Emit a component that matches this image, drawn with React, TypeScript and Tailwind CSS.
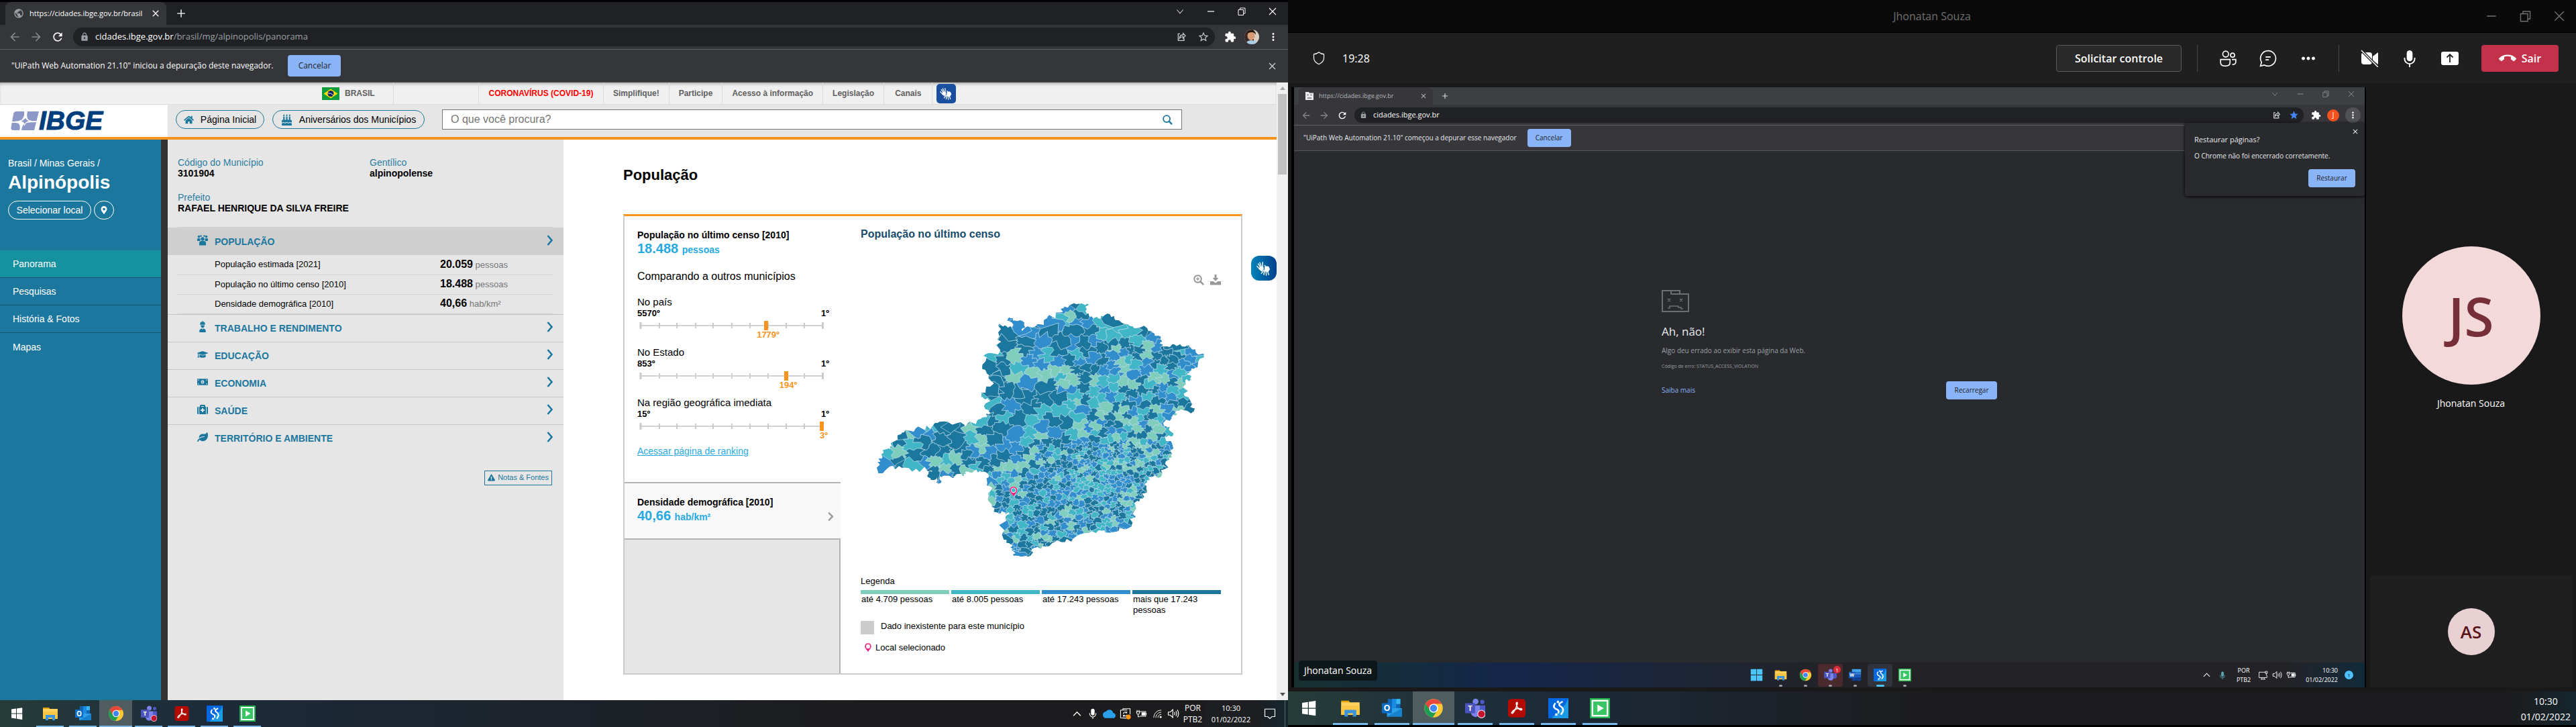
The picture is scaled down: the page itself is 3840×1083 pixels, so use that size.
import React from "react";
import {
  FaHome,
  FaBirthdayCake,
  FaGraduationCap,
  FaMoneyBillAlt,
  FaMedkit,
  FaLeaf,
  FaMapMarkerAlt,
  FaExclamationTriangle,
  FaChevronRight,
} from "react-icons/fa";
import {
  MdArrowBack,
  MdArrowForward,
  MdRefresh,
  MdLock,
  MdPublic,
  MdExtension,
  MdStarBorder,
  MdStar,
  MdMoreVert,
  MdMoreHoriz,
  MdAdd,
  MdClose,
  MdCallEnd,
  MdCloud,
} from "react-icons/md";

/* ---------- window glyphs ---------- */

type IconProps = { className?: string };

const Stroke = ({ className, children, vb = "0 0 24 24", w = 1.5 }: IconProps & { children: React.ReactNode; vb?: string; w?: number }) => (
  <svg viewBox={vb} className={className} fill="none" stroke="currentColor" strokeWidth={w} aria-hidden="true">
    {children}
  </svg>
);

const CaretDown = (p: IconProps) => <Stroke {...p} vb="0 0 12 12" w={1}><path d="M1.5 3.5 6 9l4.5-5.5" /></Stroke>;
const CaretUp = (p: IconProps) => <Stroke {...p} vb="0 0 12 12" w={1.2}><path d="M1 8.5 6 3.5l5 5" /></Stroke>;
const Minimize = (p: IconProps) => <Stroke {...p} vb="0 0 12 12" w={1.2}><path d="M1 6h10" /></Stroke>;
const Restore = (p: IconProps) => <Stroke {...p} vb="0 0 12 12" w={1}><path d="M1 3.5h7.5v8H1zM3.5 3.500v-2.500H11v8H8.500" /></Stroke>;
const Cross = (p: IconProps) => <Stroke {...p} vb="0 0 12 12" w={1.1}><path d="m1 1 10 10M11 1 1 11" /></Stroke>;
const ShareBox = (p: IconProps) => (
  <Stroke {...p} w={2}><path d="M9 5H5v15h13v-5" /><path d="M8 15c0-5 3-7.500 8-7.500V4l5 5.500-5 5.500v-3.500c-4 0-6 1-8 3.500z" /></Stroke>
);
const Mic = (p: IconProps) => (
  <svg viewBox="0 0 24 24" className={p.className} fill="currentColor" aria-hidden="true">
    <rect x="8" y="1" width="8" height="15" rx="4" />
    <path d="M5 11v1.500a7 7 0 0 0 14 0V11" fill="none" stroke="currentColor" strokeWidth="1.700" />
    <path d="M12 19.500V24" stroke="currentColor" strokeWidth="1.700" />
  </svg>
);
const Speaker = (p: IconProps) => (
  <Stroke {...p}><path d="M2 9h4l5-5v16l-5-5H2z" /><path d="M14 9q2 3 0 6M17 7q3.500 5 0 10M20 4.500q5 7.500 0 15" /></Stroke>
);
const Battery = (p: IconProps) => (
  <Stroke {...p}><path d="M9 7h12v10H8" /><path d="M22 10v4" /><path d="M13 9.500h6v5h-6z" fill="currentColor" /><path d="M3 4v3M7 4v3M2 7h6v3q-1 3-3 3t-3-3zM5 13v5h3" /></Stroke>
);
const Wifi = (p: IconProps) => (
  <Stroke {...p}><path d="M3 21C3 11 11 3 21 3M8 21C8 14 14 8 21 8M13 21c0-4.500 3.500-8 8-8" /><circle cx="19.500" cy="19.500" r="1.800" fill="currentColor" /></Stroke>
);
const Sync = (p: IconProps) => (
  <svg viewBox="0 0 24 24" className={p.className} fill="none" stroke="currentColor" strokeWidth="1.500" aria-hidden="true">
    <path d="M22 13V1H7v2M2 4h14v0M2 4v16l12 1" />
    <path d="M8 12q0-4 4-4 2 0 3 2M15 7v3h-3M15 14q-1 3-4 3-2 0-3-2M8 18v-3h3" />
    <circle cx="18.500" cy="18.500" r="5" fill="#ff9500" stroke="none" />
  </svg>
);
const Monitor = (p: IconProps) => (
  <Stroke {...p}><path d="M17 4H1v14h20v-6M8 18v4M14 18v4M5 22h12" /><path d="M17 2h5v5h-5zM19.500 7v5" /></Stroke>
);
const Notification = (p: IconProps) => <Stroke {...p}><path d="M2 3h20v15h-6l-4 4-4-4H2z" /></Stroke>;
const Pin = (p: IconProps) => (
  <svg viewBox="0 0 28 48" preserveAspectRatio="none" className={p.className} aria-hidden="true">
    <path d="M14 1C6 1 1 8 1 17c0 12 10 16 13 30 3-14 13-18 13-30C27 8 22 1 14 1z" fill="#ec1c78" />
    <ellipse cx="14" cy="17" rx="8.500" ry="11" fill="#fff" />
  </svg>
);
const Download = (p: IconProps) => (
  <svg viewBox="0 0 16 16" className={p.className} fill="currentColor" aria-hidden="true">
    <path d="M6.500 0h3v5h3L8 10 3.500 5h3z" /><path d="M0 10h4.500L8 12.500 11.500 10H16v5.500H0z" />
  </svg>
);
const ZoomIn = (p: IconProps) => (
  <Stroke {...p} vb="0 0 16 16" w={2}><circle cx="6.500" cy="6.500" r="5.300" /><path d="m10.500 10.500 4.700 4.700" strokeWidth="2.500" /><path d="M4 6.500h5M6.500 4v5" strokeWidth="1.300" /></Stroke>
);
const Lens = (p: IconProps) => (
  <Stroke {...p} vb="0 0 16 16" w={2}><circle cx="6.500" cy="6.500" r="5.300" /><path d="m10.500 10.500 4.500 4.500" strokeWidth="2.500" /></Stroke>
);
const Worker = (p: IconProps) => (
  <svg viewBox="0 0 16 18" className={p.className} fill="currentColor" aria-hidden="true">
    <path d="M4 5a4 4 0 0 1 2.500-4l.5 2 .5-3h1l.5 3 .5-2A4 4 0 0 1 12 5v1H4zM5 7h6q0 4-3 4T5 7zM3 18q-1-5 4-6l1 2 1-2q5 1 4 6z" />
  </svg>
);
const PeopleGroup = (p: IconProps) => (
  <svg viewBox="0 0 16 16" className={p.className} fill="currentColor" aria-hidden="true">
    <circle cx="2.500" cy="2.500" r="1.800" /><circle cx="13.500" cy="2.500" r="1.800" />
    <circle cx="5.500" cy="1.500" r="1.300" /><circle cx="10.500" cy="1.500" r="1.300" />
    <circle cx="8" cy="6" r="2.700" />
    <path d="M0 5.500q3-1.500 4.500.5.500 2-.5 3H0zM16 5.500q-3-1.500-4.500.5-.500 2 .5 3h4z" />
    <path d="M3 15.500V12q0-3 3-3h4q3 0 3 3v3.500z" />
  </svg>
);
const Hands = (p: IconProps) => (
  <svg viewBox="0 0 24 24" className={p.className} fill="none" stroke="currentColor" strokeWidth="1.600" strokeLinecap="round" aria-hidden="true">
    <path d="M6.500 10 3 4.500M8 9 5.500 2.500M10 9V2M5 12.500 1 8.500" />
    <path d="M6 9.500h4.500l.5 3.500-2.500 3-4-3.500z" fill="currentColor" />
    <path d="m13 16-1 6M15.500 17l.5 6M18 17l2 5M12 15l-4 5" />
    <path d="M14 10q3-2 5.500-.5l1.500 3.500-2.500 4-5-1z" fill="currentColor" />
    <path d="m13.500 7 2 3" />
  </svg>
);

/* ---------- application logos ---------- */

const WindowsLogo = ({ className }: IconProps) => (
  <svg viewBox="0 0 24 24" className={className} fill="#fff" aria-hidden="true">
    <path d="M4 5.500l7-1v7.100H4zM12 4.400l8.200-1.200v8.400H12zM4 12.500h7v7.100l-7-1zM12 12.500h8.200v8.400L12 19.700z" />
  </svg>
);
const Windows11Logo = ({ className }: IconProps) => (
  <svg viewBox="0 0 24 24" className={className} fill="#4cc5fb" aria-hidden="true">
    <path d="M1 1h10.500v10.500H1zM12.500 1H23v10.500H12.500zM1 12.500h10.500V23H1zM12.500 12.500H23V23H12.500z" />
  </svg>
);
const FolderLogo = ({ className }: IconProps) => (
  <svg viewBox="0 0 24 24" className={className} aria-hidden="true">
    <path d="M1 3h9l2 3H1z" fill="#e8a200" /><path d="M1 5h22v15H1z" fill="#ffd05c" />
    <path d="M1 9h22v11H1z" fill="#f9c646" /><path d="M5 22v-8h14v8h-4v-4H9v4z" fill="#3a93dd" />
  </svg>
);
const OutlookLogo = ({ className }: IconProps) => (
  <svg viewBox="0 0 24 24" className={className} aria-hidden="true">
    <path d="M7 1h15v12H7z" fill="#1066b5" /><path d="M12 1h5v6h-5zM12 7h5v6h-5z" fill="#1a8be0" /><path d="M17 1h5v6h-5z" fill="#35b8f1" />
    <path d="M6 12h18v10H6z" fill="#2da1e8" /><path d="M6 22 24 12v10z" fill="#1681cf" />
    <rect y="6" width="12" height="12" fill="#0a6cc4" />
    <text x="6" y="15.500" fontSize="10" fontWeight="700" fill="#fff" textAnchor="middle">O</text>
  </svg>
);
const WordLogo = ({ className }: IconProps) => (
  <svg viewBox="0 0 24 24" className={className} aria-hidden="true">
    <path d="M6 1h17v6H6z" fill="#41a5ee" /><path d="M6 7h17v5H6z" fill="#2b7cd3" /><path d="M6 12h17v5H6z" fill="#185abd" /><path d="M6 17h17v6H6z" fill="#103f91" />
    <rect y="6" width="12" height="12" fill="#185abd" />
    <text x="6" y="15.500" fontSize="9" fontWeight="700" fill="#fff" textAnchor="middle">W</text>
  </svg>
);
const ChromeLogo = ({ className }: IconProps) => (
  <svg viewBox="0 0 24 24" className={className} aria-hidden="true">
    <circle cx="12" cy="12" r="11" fill="#fcc934" />
    <path d="M12 12 2.500 6.500A11 11 0 0 0 11 23l5.500-8.500z" fill="#1e9e55" />
    <path d="M2.500 6.500A11 11 0 0 1 21.600 6.800H12L7.500 14.500z" fill="#e8453c" />
    <circle cx="12" cy="12" r="5.300" fill="#fff" /><circle cx="12" cy="12" r="4.200" fill="#4285f4" />
  </svg>
);
const TeamsLogo = ({ className, dot = true }: IconProps & { dot?: boolean }) => (
  <svg viewBox="0 0 24 24" className={className} aria-hidden="true">
    <circle cx="12.500" cy="4" r="3.500" fill="#7b83eb" /><circle cx="20.500" cy="4.500" r="2.500" fill="#5059c9" />
    <path d="M7 8.500h11V17a5.500 5.500 0 0 1-11 0z" fill="#7b83eb" /><path d="M18 8.500h6V15q0 4-6 4z" fill="#5059c9" />
    <rect y="6" width="12" height="12" fill="#4b53bc" />
    <text x="6" y="15.300" fontSize="9" fontWeight="700" fill="#fff" textAnchor="middle">T</text>
    {dot && <circle cx="19.500" cy="19" r="4.500" fill="#c4112f" stroke="#e8d0d4" strokeWidth="1" />}
  </svg>
);
const AcrobatLogo = ({ className }: IconProps) => (
  <svg viewBox="0 0 24 24" className={className} aria-hidden="true">
    <rect x="1.500" y="1" width="21" height="22" rx="4" fill="#b30b00" />
    <path d="M6 17c1.500-3 6-5 11-4.500 2 .3 1 2-.5 1.500-3-1-5.500-5-5-8 .2-1.500 1.500-1.200 1.300.3C12.300 10 9 16.500 7 18c-.7.500-1.500-.2-1-1z" fill="none" stroke="#fff" strokeWidth="1.300" />
  </svg>
);
const StudioLogo = ({ className }: IconProps) => (
  <svg viewBox="0 0 24 24" className={className} aria-hidden="true">
    <rect width="24" height="24" fill="#0067df" /><path d="M24 0v24H4L20 8z" fill="#1b9be6" />
    <path d="M8 6.500c-3 4-.5 6 2.500 7 2 .8 2 2.500 1.500 4" fill="none" stroke="#fff" strokeWidth="2" strokeLinecap="round" />
    <path d="M16.500 4.500c-4 1.500-4.500 4-1.500 5.500 3.500 2 3.500 6 .5 9" fill="none" stroke="#fff" strokeWidth="2" strokeLinecap="round" />
    <circle cx="11.500" cy="4.500" r="1.500" fill="#fff" /><circle cx="9.500" cy="19.500" r="1.500" fill="#fff" />
  </svg>
);
const RecorderLogo = ({ className }: IconProps) => (
  <svg viewBox="0 0 24 24" className={className} aria-hidden="true">
    <rect width="24" height="24" fill="#20b24b" /><rect x="3" y="3" width="18" height="18" fill="#3ac565" stroke="#fff" strokeWidth="2" />
    <path d="m9 7.500 7.500 4.500L9 16.500z" fill="#fff" />
  </svg>
);
const BrazilFlag = () => (
  <svg viewBox="0 0 26 19" className="h-[19px] w-[26px]" aria-hidden="true">
    <rect width="26" height="19" fill="#0d9c3b" /><path d="M13 2.500 23.500 9.500 13 16.500 2.500 9.500z" fill="#fd0" />
    <circle cx="13" cy="9.500" r="4.500" fill="#10226b" /><path d="M8.800 8.800q5-.5 8 3" stroke="#fff" strokeWidth=".9" fill="none" />
  </svg>
);
const IbgeLogo = () => (
  <a href="#inicio" aria-label="IBGE" className="flex items-center">
    <svg viewBox="0 0 42 28" className="h-[28px] w-[42px]" aria-hidden="true">
      <path d="M8 0h34l-7 28H4q-4 0-3.500-4L4 4q1-4 4-4z" fill="#8c98c7" />
      <path d="M20 0q1 10-5 13-5 2-15 2v2q10-1 12 1.500 3 3 1 9.500h3q1-9 7-11 6-1 15-1v-2q-10 1-12-2-3-4-1-12z" fill="#fff" />
      <path d="M22 8.500q2 5 8 5.500-7 1-9.500 6-1-5-8-5.500 7-1 9.500-6z" fill="#8c98c7" stroke="#fff" strokeWidth="1.200" />
    </svg>
    <span className="text-[39px] leading-[28px] font-bold italic text-[#003e7e] [-webkit-text-stroke:1px_#003e7e]">IBGE</span>
  </a>
);
const Portrait = () => (
  <svg viewBox="0 0 22 22" className="h-[22px] w-[22px] rounded-full" aria-label="Perfil">
    <rect width="22" height="22" fill="#d9cfc4" /><path d="M0 0h14v22H0z" fill="#3a2a24" />
    <ellipse cx="10" cy="9" rx="5.500" ry="7" fill="#d99a78" /><path d="M4 7q0-6 7-6 6 0 6 7-2-4-6-4-5 0-7 3z" fill="#241712" />
    <path d="M2 22q1-6 8-6 8 0 10 6z" fill="#a9cde4" />
  </svg>
);

/* ---------- choropleth map ---------- */

const COLORS: Record<string, string> = { D: "#1c779e", B: "#318dcb", T: "#41b6c6", G: "#7fcdbb" };

const OUTLINE =
  "835,405 860,407 884,412 877,450 895,462 915,470 940,455 970,460 1010,495 1040,512 1085,512 1110,535 1130,560 1132,590 1160,592 1178,580 1215,590 1250,602 1280,635 1258,678 1235,692 1222,710 1240,730 1215,735 1210,790 1235,825 1245,865 1210,860 1180,870 1187,885 1150,900 1145,930 1162,932 1172,970 1145,970 1170,1000 1172,1045 1160,1070 1145,1110 1130,1145 1095,1143 1085,1165 1083,1200 1070,1235 1050,1245 1040,1290 1035,1335 990,1360 955,1380 930,1372 885,1380 830,1405 790,1420 750,1435 720,1448 695,1445 688,1470 660,1480 625,1478 630,1455 618,1455 615,1430 592,1410 600,1330 612,1300 590,1292 570,1295 550,1260 540,1225 548,1200 535,1170 540,1145 515,1122 490,1118 480,1130 465,1120 455,1138 440,1130 390,1138 372,1140 374,1170 367,1172 362,1145 340,1155 333,1130 345,1115 290,1108 240,1105 200,1098 160,1128 158,1080 175,1060 190,1025 208,1015 225,970 240,955 270,948 310,938 345,930 370,910 430,915 460,930 500,905 525,890 545,870 528,855 535,808 512,805 515,785 545,760 540,710 518,685 530,650 530,622 580,605 570,560 572,500 595,500 620,510 610,465 630,480 662,488 655,525 700,505 740,470 785,445 800,420";

const SEEDS =
  "812,430B 860,415T 852,455D 770,490B 797,480T 822,465G 885,480B 842,484B 832,520D 895,525D 940,488T 975,475D 935,535T 965,548T 1000,520T 1025,530T 1065,525D 1105,540B 1050,565T 1010,580D 975,602G 960,580D 925,590D 905,565B 870,572D 880,610D 830,570B 740,520D 790,565D 720,560B 625,490B 650,505B 600,540D 600,585D 670,575D 680,530B 665,605D 705,620B 740,628T 775,605D 550,630T 590,645D 545,680D 590,690D 630,630G 640,682T 625,708G 680,650B 720,668B 672,740B 700,705G 730,708G 780,655B 772,690G 805,690G 820,650D 848,625T 850,655B 845,685D 565,760D 600,775D 540,790D 575,720D 660,800D 690,850D 645,780D 745,750D 740,810D 785,720T 825,730G 800,740G 815,775B 780,810D 875,680D 875,720D 900,640B 925,650D 905,690D 965,670B 940,690B 970,625B 870,760D 905,730G 935,740T 970,725T 1000,738G 1010,690G 1018,638T 1045,665T 1050,630D 1088,590G 1085,625G 1060,600D 1115,590B 1150,610D 1190,628D 1140,650D 1165,675D 1115,660D 1200,600T 1240,612B 1235,645B 1265,640T 1215,665B 1230,685B 1175,710B 1140,730G 1195,700T 1205,745G 1170,775T 1228,722T 1080,690B 1065,730D 1040,710B 1090,660B 1075,775D 1110,770D 1125,820D 1180,830D 1212,830D 1235,850D 1160,800B 1160,880B 1080,890D 1070,865T 1105,915G 1125,895T 1035,870B 975,850D 940,850G 930,885G 960,800B 990,800T 1025,790D 900,785T 905,820T 875,815D 850,830G 840,800T 820,840T 785,860T 855,858B 900,885D 845,883T 760,900D 805,905D 770,955B 855,920G 860,960G 885,930B 720,870T 690,910T 635,895D 590,885T 612,840B 550,830T 575,860D 540,900D 590,940D 685,965T 675,995T 630,965B 720,930B 715,975G 740,1000D 775,1010D 810,985D 835,965T 870,990B 555,985D 520,950D 485,980T 508,985G 485,935G 515,910T 235,985D 272,1008T 266,955G 312,985D 300,950B 335,960B 347,932T 385,935D 430,932D 370,975D 430,985D 445,1015D 370,1040D 345,1035D 280,1050D 226,1045G 195,1045T 178,1090B 225,1085D 272,1095T 320,1090B 355,1080G 396,1080T 430,1068G 462,1050D 470,1085D 350,1125D 372,1150D 395,1110G 395,1132B 425,1112D 453,1120G 500,1105T 488,1030B 510,1018G 540,1045B 520,1090D 545,1112D 600,1050D 565,1078D 630,1025B 600,1008B 642,1070B 660,1040D 575,1108G 620,1100G 650,1100G 680,1060G 700,1030G 710,1058B 745,1045B 700,1092D 660,1132D 600,1140T 580,1155T 620,1160T 555,1172B 572,1192D 600,1215D 628,1180G 655,1175D 715,1180D 685,1145B 700,1145D 835,1275D 915,1330D 910,1160D 1065,965D 1145,1080D 1115,1120D 1155,1020B 1110,1015D 800,1300G 1000,1310D 860,1340B 780,1365D 820,1095D 770,1100D 740,1320D";

type Pt = [number, number];

function makeRandom(seed: number) {
  let s = seed;
  return () => {
    s = (s * 1664525 + 1013904223) % 4294967296;
    return s / 4294967296;
  };
}

function hash(x: number, y: number) {
  const v = Math.sin(Math.round(x * 2) * 12.9898 + Math.round(y * 2) * 78.233) * 43758.5453;
  return v - Math.floor(v) - 0.5;
}

function inside(p: Pt, poly: Pt[]) {
  let hit = false;
  for (let i = 0, j = poly.length - 1; i < poly.length; j = i++) {
    const [xi, yi] = poly[i];
    const [xj, yj] = poly[j];
    if (yi > p[1] !== yj > p[1] && p[0] < ((xj - xi) * (p[1] - yi)) / (yj - yi) + xi) hit = !hit;
  }
  return hit;
}

/* Splits an edge with a repeatable wobble, so neighbours share the same border. */
function roughen(a: Pt, b: Pt, amount: number): Pt[] {
  const flip = a[0] > b[0] || (a[0] === b[0] && a[1] > b[1]);
  const p = flip ? b : a;
  const q = flip ? a : b;
  const dx = q[0] - p[0];
  const dy = q[1] - p[1];
  const parts = [0.25, 0.5, 0.75].map((t): Pt => {
    const mx = p[0] + dx * t;
    const my = p[1] + dy * t;
    const h = hash(mx, my) * amount;
    return [mx - dy * h, my + dx * h];
  });
  return flip ? parts.reverse() : parts;
}

function toPath(poly: Pt[], amount: number) {
  const pts: Pt[] = [];
  poly.forEach((a, i) => {
    pts.push(a, ...roughen(a, poly[(i + 1) % poly.length], amount));
  });
  return "M" + pts.map((p) => p[0].toFixed(1) + " " + p[1].toFixed(1)).join("L") + "Z";
}

function buildMap() {
  const border = OUTLINE.split(" ").map((s) => s.split(",").map(Number) as Pt);
  const sites = SEEDS.split(" ").map((s) => {
    const [x, rest] = s.split(",");
    return { x: Number(x), y: parseInt(rest, 10), c: rest.slice(-1) };
  });
  const rnd = makeRandom(31019);
  const fixed = sites.length;
  for (let k = 0; k < 24000; k++) {
    const x = 480 + rnd() * 800;
    const y = 560 + rnd() * 930;
    const pick = rnd();
    if (!inside([x, y], border)) continue;
    const north = y < 1000 && x < 980 - (y - 560) * 0.2;
    if (north || (y < 1130 && x < 690)) continue;
    const gap = y < 880 ? 28 : y < 1010 ? 22 : x > 820 && y < 1320 ? 15 : 18;
    let ok = true;
    for (let i = 0; i < sites.length && ok; i++) {
      const d = Math.hypot(sites[i].x - x, sites[i].y - y);
      if (d < (i < fixed ? Math.max(gap, 20) : gap)) ok = false;
    }
    if (!ok) continue;
    const light = x > 760 ? 0.38 : 0.3;
    const c = pick < light * 0.4 ? "G" : pick < light ? "T" : pick < light + 0.3 ? "B" : "D";
    sites.push({ x, y, c });
  }
  const cells = sites.map((s) => {
    let poly: Pt[] = [[s.x - 90, s.y - 90], [s.x + 90, s.y - 90], [s.x + 90, s.y + 90], [s.x - 90, s.y + 90]];
    for (const o of sites) {
      if (o === s || Math.abs(o.x - s.x) > 180 || Math.abs(o.y - s.y) > 180) continue;
      const nx = o.x - s.x;
      const ny = o.y - s.y;
      const lim = (o.x * o.x + o.y * o.y - s.x * s.x - s.y * s.y) / 2;
      const out: Pt[] = [];
      for (let i = 0; i < poly.length; i++) {
        const a = poly[i];
        const b = poly[(i + 1) % poly.length];
        const da = a[0] * nx + a[1] * ny - lim;
        const db = b[0] * nx + b[1] * ny - lim;
        if (da <= 0) out.push(a);
        if ((da < 0 && db > 0) || (da > 0 && db < 0)) {
          const t = da / (da - db);
          out.push([a[0] + (b[0] - a[0]) * t, a[1] + (b[1] - a[1]) * t]);
        }
      }
      poly = out;
    }
    return { d: toPath(poly, 0.75), c: COLORS[s.c] };
  });
  return { outline: toPath(border, 0.6), cells };
}

const MAP = buildMap();

const StateMap = () => (
  <svg viewBox="150 395 1140 1095" preserveAspectRatio="none" className="h-[384px] w-[494px]" role="img" aria-label="Mapa de Minas Gerais por população">
    <clipPath id="estado"><path d={MAP.outline} /></clipPath>
    <g clipPath="url(#estado)">
      <path d={MAP.outline} fill="#1c779e" />
      {MAP.cells.map((c, i) => (
        <path key={i} d={c.d} fill={c.c} stroke="#c6e2ee" strokeWidth="0.6" vectorEffect="non-scaling-stroke" />
      ))}
    </g>
    <svg x="611" y="1183" width="28" height="48" viewBox="0 0 28 48">
      <path d="M14 1C6 1 1 8 1 17c0 12 10 16 13 30 3-14 13-18 13-30C27 8 22 1 14 1z" fill="#ec1c78" stroke="#fff" strokeWidth="1" />
      <ellipse cx="14" cy="17" rx="8.500" ry="11" fill="#fff" /><ellipse cx="14" cy="17" rx="6.500" ry="8.500" fill="#41b6c6" />
    </svg>
  </svg>
);

/* ---------- IBGE page ---------- */

const Ranking = ({ label, last, rank, pos }: { label: string; last: string; rank: string; pos: number }) => (
  <div className="mb-[10px]">
    <p className="text-[15px] leading-[18px]">{label}</p>
    <div className="mr-[17px] flex justify-between text-[13px] leading-4 font-bold"><span>{last}</span><span>1º</span></div>
    <div className="relative ml-[3px] mt-[3px] h-7 w-[276px]">
      <svg viewBox="0 0 276 14" className="block h-[14px] w-[276px]" aria-hidden="true">
        <path d="M0 7h275" stroke="#d2d2d2" strokeWidth="2" />
        <path d="M2 2v10M273.500 2v10" stroke="#ccc" strokeWidth="3" />
        <path d="M30 3v8M56 3v8M84 3v8M110 3v8M138 3v8M165 3v8M192 3v8M219 3v8M246 3v8" stroke="#ccc" strokeWidth="2" />
        <rect x={pos - 3} y="0" width="6" height="14" fill="#f7941d" />
      </svg>
      <span className="absolute top-[14px] -translate-x-1/2 text-[13px] leading-[14px] font-bold text-[#f7941d]" style={{ left: pos + 3 }}>{rank}</span>
    </div>
  </div>
);

const themes = [
  { name: "TRABALHO E RENDIMENTO", icon: <Worker className="h-[17px] w-4" /> },
  { name: "EDUCAÇÃO", icon: <FaGraduationCap className="size-4" /> },
  { name: "ECONOMIA", icon: <FaMoneyBillAlt className="size-4" /> },
  { name: "SAÚDE", icon: <FaMedkit className="size-4" /> },
  { name: "TERRITÓRIO E AMBIENTE", icon: <FaLeaf className="size-4" /> },
];

const ThemeRow = ({ name, icon, active = false }: { name: string; icon: React.ReactNode; active?: boolean }) => (
  <button
    className={
      active
        ? "flex h-[41px] w-full items-center bg-[#cfcfcf] pl-[44px] pr-[15px] text-[#1c779e]"
        : "flex h-[41px] w-full items-center border-t border-[#c6c6c6] pl-[44px] pr-[15px] text-[#1c779e]"
    }
  >
    <span className="w-[26px] shrink-0 pb-1">{icon}</span>
    <span className="flex-1 text-left text-[14px] leading-4 font-bold">{name}</span>
    <svg viewBox="0 0 10 16" className="mb-1 h-4 w-[10px]" fill="none" stroke="currentColor" strokeWidth="2.600" aria-hidden="true"><path d="m1.500 1 6 7-6 7" /></svg>
  </button>
);

const facts = [
  ["População estimada [2021]", "20.059", "pessoas"],
  ["População no último censo [2010]", "18.488", "pessoas"],
  ["Densidade demográfica [2010]", "40,66", "hab/km²"],
];

const Fact = ({ label, value }: { label: string; value: string }) => (
  <div>
    <dt className="text-[14px] leading-4 text-[#2d7da2]">{label}</dt>
    <dd className="text-[14px] leading-4 font-bold text-black">{value}</dd>
  </div>
);

const legend = [
  { label: "até 4.709 pessoas", bar: "bg-[#7fcdbb]" },
  { label: "até 8.005 pessoas", bar: "bg-[#41b6c6]" },
  { label: "até 17.243 pessoas", bar: "bg-[#318dcb]" },
  { label: "mais que 17.243 pessoas", bar: "bg-[#1c779e]" },
];

const IbgePage = () => (
  <div className="flex min-h-0 flex-1 font-['Liberation_Sans',Arial,sans-serif] text-black">
    <div className="flex min-w-0 flex-1 flex-col bg-white">
      <nav className="flex h-[33px] shrink-0 items-stretch border-b border-[#dcdcdc] bg-[#f0f0f0] text-[12px] font-bold text-[#606060] shadow-[inset_0_4px_4px_-2px_#aaa]">
        <a href="#brasil" className="ml-[480px] flex w-[107px] items-center gap-2 border-r border-[#dcdcdc]"><BrazilFlag />BRASIL</a>
        <span className="w-[127px] border-r border-[#dcdcdc]" />
        <a href="#covid" className="flex w-[186px] items-center justify-center border-r border-[#dcdcdc] text-[#f00]">CORONAVÍRUS (COVID-19)</a>
        <a href="#simplifique" className="flex items-center border-r border-[#dcdcdc] px-[14px]">Simplifique!</a>
        <a href="#participe" className="flex items-center border-r border-[#dcdcdc] px-[14px]">Participe</a>
        <a href="#acesso" className="flex items-center border-r border-[#dcdcdc] px-[14px]">Acesso à informação</a>
        <a href="#legislacao" className="flex items-center border-r border-[#dcdcdc] px-[14px]">Legislação</a>
        <a href="#canais" className="flex items-center border-r border-[#dcdcdc] px-[16px]">Canais</a>
        <button aria-label="Libras" className="ml-[6px] mt-[2px] flex size-[29px] items-center justify-center rounded-[5px] bg-[#1a4fa0] text-white"><Hands className="size-[19px]" /></button>
      </nav>

      <header className="flex h-[52px] shrink-0 border-b-4 border-[#f7941d] bg-[#e6e6e6]">
        <div className="flex w-[250px] items-center bg-white pl-4"><IbgeLogo /></div>
        <div className="flex flex-1 items-center gap-3 pb-[4px] pl-3 pr-[141px]">
          <button className="flex h-7 w-[132px] items-center justify-center gap-[10px] rounded-full border border-[#1c779e] text-[14px]"><FaHome className="size-[15px] text-[#1c779e]" />Página Inicial</button>
          <button className="flex h-7 w-[227px] items-center justify-center gap-[10px] rounded-full border border-[#1c779e] text-[14px]"><FaBirthdayCake className="size-[17px] text-[#1c779e]" />Aniversários dos Municípios</button>
          <div className="ml-[14px] flex h-[30px] flex-1 items-center border border-[#767676] bg-white pl-3 pr-[13px]">
            <input aria-label="O que você procura?" placeholder="O que você procura?" className="min-w-0 flex-1 text-[16px] leading-5 outline-none placeholder:text-[#757575]" />
            <button aria-label="Buscar"><Lens className="size-[15px] text-[#1c779e]" /></button>
          </div>
        </div>
      </header>

      <div className="relative flex min-h-0 flex-1">
        <aside className="w-[250px] shrink-0 border-r-[10px] border-[#333] bg-[#1c779e] pt-[27px] text-white">
          <div className="px-3">
            <p className="text-[14px] leading-4">Brasil / Minas Gerais /</p>
            <h1 className="mt-[5px] text-[28px] leading-8 font-bold">Alpinópolis</h1>
            <div className="mt-[11px] flex gap-1">
              <button className="h-7 w-[124px] rounded-full border border-white text-[14px] leading-4">Selecionar local</button>
              <button aria-label="Local" className="flex h-7 w-[30px] items-center justify-center rounded-full border border-white"><FaMapMarkerAlt className="size-3" /></button>
            </div>
          </div>
          <nav className="mt-[46px] text-[14px] leading-4">
            <a href="#panorama" className="flex h-[41px] items-center border-b border-[#145672] bg-[#1591a0] pl-[19px]">Panorama</a>
            <a href="#pesquisas" className="flex h-[41px] items-center border-b border-[#145672] pl-[19px]">Pesquisas</a>
            <a href="#historia" className="flex h-[41px] items-center border-b border-[#145672] pl-[19px]">História &amp; Fotos</a>
            <a href="#mapas" className="flex h-[41px] items-center pl-[19px]">Mapas</a>
          </nav>
        </aside>

        <section className="w-[590px] shrink-0 bg-[#e6e6e6] pt-[26px]">
          <dl className="mx-[15px] grid grid-cols-[286px_1fr] gap-y-5 border-b border-[#cfcfcf] pb-5">
            <Fact label="Código do Município" value="3101904" />
            <Fact label="Gentílico" value="alpinopolense" />
            <Fact label="Prefeito" value="RAFAEL HENRIQUE DA SILVA FREIRE" />
          </dl>
          <ThemeRow active name="POPULAÇÃO" icon={<PeopleGroup className="size-4" />} />
          <table className="mx-[15px] w-[560px] border-collapse">
            <tbody>
              {facts.map(([label, value, unit]) => (
                <tr key={label} className="h-[29px] border-b border-[#cfcfcf] text-[13px] leading-4">
                  <td className="pl-[55px]">{label}</td>
                  <td className="w-[169px]"><b className="text-[16px]">{value}</b> <span className="text-[#777]">{unit}</span></td>
                </tr>
              ))}
            </tbody>
          </table>
          {themes.map((t) => <ThemeRow key={t.name} {...t} />)}
          <div className="mt-[28px] flex justify-end pr-[17px]">
            <button className="flex h-[22px] items-center gap-1 border border-[#1c779e] px-1 text-[11px] text-[#1c779e]"><FaExclamationTriangle className="size-[11px]" />Notas &amp; Fontes</button>
          </div>
        </section>

        <main className="flex min-w-0 flex-1 flex-col pb-[38px] pl-[89px] pr-[51px] pt-[39px]">
          <h2 className="text-[22px] leading-7 font-bold">População</h2>
          <div className="mt-[44px] flex flex-1 border-2 border-t-3 border-[#ccc] border-t-[#f7941d]">
            <div className="flex w-[322px] shrink-0 flex-col">
              <div className="h-[396px] pl-[19px] pt-5">
                <p className="text-[14px] leading-4 font-bold">População no último censo [2010]</p>
                <p className="text-[20px] leading-6 font-bold text-[#27a9e1]">18.488 <span className="text-[14px]">pessoas</span></p>
                <p className="mt-[18px] mb-[19px] text-[16px] leading-5">Comparando a outros municípios</p>
                <Ranking label="No país" last="5570º" rank="1779º" pos={189} />
                <Ranking label="No Estado" last="853º" rank="194º" pos={219} />
                <Ranking label="Na região geográfica imediata" last="15º" rank="3º" pos={272} />
                <a href="#ranking" className="-mt-[2px] block text-[14px] leading-4 text-[#27a9e1] underline">Acessar página de ranking</a>
              </div>
              <button className="flex h-[86px] items-center border-y-2 border-[#b3b3b3] bg-[#f8f8f8] pl-[19px] pr-[9px] text-left">
                <span className="flex-1">
                  <span className="block text-[14px] leading-4 font-bold">Densidade demográfica [2010]</span>
                  <span className="block text-[20px] leading-6 font-bold text-[#27a9e1]">40,66 <span className="text-[14px]">hab/km²</span></span>
                </span>
                <FaChevronRight className="mt-4 h-[15px] w-[11px] text-[#999]" />
              </button>
              <div className="flex-1 border-r-2 border-[#b3b3b3] bg-[#e6e6e6]" />
            </div>
            <div className="min-w-0 flex-1 px-[30px] pt-[17px]">
              <h3 className="text-[16px] leading-5 font-bold text-[#174b6b]">População no último censo</h3>
              <div className="mt-[50px] flex justify-end gap-[9px] text-[#999]">
                <button aria-label="Ampliar"><ZoomIn className="size-4" /></button>
                <button aria-label="Baixar"><Download className="size-4" /></button>
              </div>
              <div className="mt-[23px] pl-[22px]"><StateMap /></div>
              <div className="mt-[26px] text-[13px] leading-4">
                <p>Legenda</p>
                <ul className="mt-[5px] grid grid-cols-4 gap-[3px]">
                  {legend.map((l) => (
                    <li key={l.label}><div className={"h-[6px] " + l.bar} /><span className="block pl-px">{l.label}</span></li>
                  ))}
                </ul>
                <p className="mt-2 flex h-5 items-start gap-[10px]"><span className="size-5 bg-[#ccc]" />Dado inexistente para este município</p>
                <p className="mt-3 flex items-center gap-[6px] pl-[6px]"><Pin className="h-[14px] w-[10px]" />Local selecionado</p>
              </div>
            </div>
          </div>
        </main>
        <button aria-label="Conteúdo em Libras" className="absolute right-0 top-[173px] flex h-[37px] w-[38px] items-center justify-center rounded-xl bg-linear-to-r from-[#0885b8] to-[#003f8c] text-white"><Hands className="size-[22px]" /></button>
      </div>
    </div>

    <div className="flex w-[17px] shrink-0 flex-col items-center bg-[#f0f0f0] py-[6px]">
      <svg viewBox="0 0 8 5" className="h-[5px] w-2" fill="#a3a3a3" aria-hidden="true"><path d="M0 5 4 0l4 5z" /></svg>
      <div className="mt-[6px] h-[120px] w-[13px] bg-[#c1c1c1]" />
      <svg viewBox="0 0 8 5" className="mt-auto h-[5px] w-2" fill="#505050" aria-hidden="true"><path d="m0 0 4 5 4-5z" /></svg>
    </div>
  </div>
);

/* ---------- taskbars ---------- */

const apps = [
  { name: "Explorador", Logo: FolderLogo },
  { name: "Outlook", Logo: OutlookLogo },
  { name: "Chrome", Logo: ChromeLogo },
  { name: "Teams", Logo: TeamsLogo },
  { name: "Acrobat", Logo: AcrobatLogo },
  { name: "UiPath Studio", Logo: StudioLogo },
  { name: "Gravador", Logo: RecorderLogo },
];

const tray = [
  <CaretUp key="mais" className="size-[13px]" />,
  <Mic key="mic" className="size-4" />,
  <MdCloud key="nuvem" className="size-[19px] text-[#28a0ea]" />,
  <Sync key="sync" className="size-[17px]" />,
  <Battery key="bateria" className="size-[17px]" />,
  <Wifi key="wifi" className="size-[15px]" />,
  <Speaker key="som" className="size-[18px]" />,
];

const LeftTaskbar = () => (
  <footer className="flex h-10 shrink-0 items-stretch bg-[#14262e] text-[12px] leading-[17px] text-white">
    <div className="flex flex-1 bg-linear-to-r from-[#263c39] from-0% via-[#1c2a3a] via-20% to-[#1c1c1e] to-80%">
      <button aria-label="Iniciar" className="flex w-[50px] items-center justify-center"><WindowsLogo className="size-6" /></button>
      {apps.map(({ name, Logo }) => (
        <button key={name} aria-label={name} className={name === "Chrome" ? "relative flex w-[49px] items-center justify-center bg-[#4f5c60]" : "relative flex w-[49px] items-center justify-center"}>
          <Logo className="size-6" />
          <span className={name === "Chrome" ? "absolute inset-x-0 bottom-0 h-[2px] bg-[#76b9ed]" : "absolute inset-x-1 bottom-0 h-[2px] bg-[#76b9ed]"} />
        </button>
      ))}
    </div>
    <div className="flex items-center bg-[#1c1c1e]">
      {tray.map((icon, i) => <span key={i} className="flex w-6 justify-center">{icon}</span>)}
    </div>
    <p className="w-[34px] bg-[#1c1c1e] pt-[3px] text-center">POR<br />PTB2</p>
    <p className="w-[76px] whitespace-nowrap bg-[#1c1e21] pl-1 pt-[3px] text-center text-[11px]">10:30<br />01/02/2022</p>
    <button aria-label="Notificações" className="flex w-[44px] items-center justify-center bg-linear-to-r from-[#1c1e21] to-[#15262e]"><Notification className="size-[18px]" /></button>
    <span className="mr-1 w-px bg-[#5b666b]" />
  </footer>
);

const RightTaskbar = () => (
  <footer className="flex h-[53px] shrink-0 items-stretch border-b-3 border-black bg-linear-to-r from-[#263c39] from-0% via-[#1c2a3a] via-20% to-[#1c1c1e] to-50% text-white">
    <button aria-label="Iniciar" className="flex w-[62px] items-center justify-center"><WindowsLogo className="size-[30px]" /></button>
    {apps.map(({ name, Logo }) => (
      <button key={name} aria-label={name} className={name === "Chrome" ? "relative flex w-[62px] items-center justify-center bg-[#4f5c60]" : "relative flex w-[62px] items-center justify-center"}>
        <Logo className="size-[30px]" />
        <span className={name === "Chrome" ? "absolute inset-x-0 bottom-0 h-[3px] bg-[#76b9ed]" : "absolute inset-x-[5px] bottom-0 h-[3px] bg-[#76b9ed]"} />
      </button>
    ))}
    <p className="ml-auto bg-linear-to-r from-[#1c1c1e] to-[#14262e] pl-5 pr-2 pt-[3px] text-center text-[14px] leading-[23px]">10:30<br />01/02/2022</p>
  </footer>
);

/* ---------- left window ---------- */

const LeftScreen = () => (
  <div className="flex min-w-0 flex-1 basis-1/2 flex-col border-t-3 border-black bg-[#202124] text-white">
    <div className="flex h-[34px] shrink-0 items-center bg-[#202124] pl-2">
      <div className="flex h-full w-[240px] items-center rounded-t-lg bg-[#35363a] pl-[12px]">
        <MdPublic className="size-4 text-[#9aa0a6]" />
        <span className="ml-2 flex-1 whitespace-nowrap text-[11px]">https://cidades.ibge.gov.br/brasil</span>
        <button aria-label="Fechar guia" className="mr-2"><MdClose className="size-4" /></button>
      </div>
      <button aria-label="Nova guia" className="ml-[12px]"><MdAdd className="size-5 text-[#dadce0]" /></button>
      <div className="ml-auto flex items-center gap-[34px] pb-[7px] pr-[17px]">
        <CaretDown className="size-3" /><Minimize className="size-3" /><Restore className="size-3" /><Cross className="size-3" />
      </div>
    </div>
    <div className="flex h-[37px] shrink-0 items-center border-b border-[#5f6064] bg-[#35363a] pl-[12px]">
      <div className="flex w-[97px] items-center gap-3">
        <MdArrowBack className="size-5 text-[#85878a]" /><MdArrowForward className="size-5 text-[#85878a]" /><MdRefresh className="size-5" />
      </div>
      <div className="flex h-7 flex-1 items-center rounded-full bg-[#202124] pl-[10px] pr-2">
        <MdLock className="size-[14px] text-[#9aa0a6]" />
        <span className="ml-[9px] flex-1 whitespace-nowrap text-[13px]">cidades.ibge.gov.br<span className="text-[#9aa0a6]">/brasil/mg/alpinopolis/panorama</span></span>
        <ShareBox className="mr-4 size-4 text-[#c4c7cb]" /><MdStarBorder className="size-[18px] text-[#c4c7cb]" />
      </div>
      <div className="flex w-[109px] items-center justify-between pl-[14px] pr-[13px]">
        <MdExtension className="size-[18px]" /><Portrait /><MdMoreVert className="size-[18px]" />
      </div>
    </div>
    <div className="flex h-[49px] shrink-0 items-center border-b border-[#555] bg-[#35363a] pl-[17px] pr-[15px] text-[12px]">
      <span>"UiPath Web Automation 21.10" iniciou a depuração deste navegador.</span>
      <button className="ml-[22px] h-8 w-[79px] rounded bg-[#8ab4f8] text-[12px] text-[#202124]">Cancelar</button>
      <button aria-label="Fechar" className="ml-auto"><MdClose className="size-[17px] text-[#c4c7cb]" /></button>
    </div>
    <IbgePage />
    <LeftTaskbar />
  </div>
);

/* ---------- shared screen ---------- */

const SadTab = () => (
  <svg viewBox="0 0 41 34" className="h-[34px] w-[41px]" fill="none" stroke="#6c6e73" strokeWidth="2" aria-hidden="true">
    <path d="M1 33V2h26v5h13v26zM14 2v5h13" />
    <path d="m9 14 4 4m0-4-4 4M27 14l4 4m0-4-4 4M9 28h3v-3h13v2h4v2h3" strokeWidth="1.500" />
  </svg>
);

const sharedApps = [
  { name: "Explorador", Logo: FolderLogo },
  { name: "Chrome", Logo: ChromeLogo },
  { name: "Teams", Logo: (p: IconProps) => <TeamsLogo {...p} dot={false} /> },
  { name: "Word", Logo: WordLogo },
  { name: "UiPath Studio", Logo: StudioLogo },
  { name: "Gravador", Logo: RecorderLogo },
];

const SharedScreen = () => (
  <div className="relative flex min-w-0 flex-1 flex-col border-l-4 border-r-2 border-black bg-[#292a2d] text-[#d5d7da]">
    <div className="flex h-[26px] shrink-0 items-center bg-[#3c4043] pl-[7px]">
      <div className="flex h-full w-[200px] items-center rounded-t-lg bg-[#36363b] pl-[10px] text-[#b4b6b9]">
        <svg viewBox="0 0 12 12" className="size-3" aria-hidden="true"><path d="M0 0h5l1 1.500h6V12H0z" fill="#e8eaed" /><path d="M2.500 4.500h2M7.500 4.500h2M3 9h6" stroke="#36363b" /></svg>
        <span className="ml-2 flex-1 text-[9px]">https://cidades.ibge.gov.br</span>
        <MdClose className="mr-2 size-3" />
      </div>
      <MdAdd className="ml-[11px] size-[14px]" />
      <div className="ml-auto flex gap-7 pb-[7px] pr-[15px] text-[#8f9194]">
        <CaretDown className="size-[10px]" /><Minimize className="size-[10px]" /><Restore className="size-[10px]" /><Cross className="size-[10px]" />
      </div>
    </div>
    <div className="flex h-[31px] shrink-0 items-center border-b border-[#5f6064] bg-[#36363b] pl-[10px] pt-px">
      <div className="flex w-[80px] items-center gap-[11px]">
        <MdArrowBack className="size-4 text-[#85878a]" /><MdArrowForward className="size-4 text-[#85878a]" /><MdRefresh className="size-4 text-white" />
      </div>
      <div className="flex h-[23px] flex-1 items-center rounded-full bg-[#202124] pl-[8px] pr-[7px]">
        <MdLock className="size-[11px] text-[#9aa0a6]" />
        <span className="ml-[9px] flex-1 text-[11px] text-white">cidades.ibge.gov.br</span>
        <ShareBox className="mr-3 size-[13px]" /><MdStar className="size-[15px] text-[#4285f4]" />
      </div>
      <div className="flex w-[91px] items-center justify-between pl-[11px] pr-[6px]">
        <MdExtension className="size-[15px] text-white" />
        <span className="flex size-[18px] items-center justify-center rounded-full bg-[#f4511e] text-[10px] text-white">J</span>
        <span className="flex size-[23px] items-center justify-center rounded-full bg-[#515256]"><MdMoreVert className="size-[15px] text-white" /></span>
      </div>
    </div>
    <div className="flex h-[38px] shrink-0 items-center border-b border-[#55565a] bg-[#36363b] pl-[14px] text-[10px] text-[#e8eaed]">
      <span>"UiPath Web Automation 21.10" começou a depurar esse navegador</span>
      <button className="ml-4 h-[27px] w-[65px] rounded-sm bg-[#8ab4f8] text-[10px] text-[#202124]">Cancelar</button>
    </div>

    <section className="flex-1 pt-[206px]">
      <div className="mx-auto w-[500px]">
        <SadTab />
        <h2 className="mt-[17px] text-[17px] leading-6 text-[#e8eaed]">Ah, não!</h2>
        <p className="mt-2 text-[10px] leading-4 text-[#9aa0a6]">Algo deu errado ao exibir esta página da Web.</p>
        <p className="mt-2 text-[7px] leading-4 text-[#9a9ea3]">Código de erro: STATUS_ACCESS_VIOLATION</p>
        <div className="mt-[14px] flex items-center justify-between">
          <a href="#ajuda" className="text-[10px] text-[#8ab4f8]">Saiba mais</a>
          <button className="h-[27px] w-[76px] rounded-sm bg-[#8ab4f8] text-[10px] text-[#202124]">Recarregar</button>
        </div>
      </div>
    </section>

    <div className="flex h-[37px] shrink-0 items-center bg-linear-to-r from-[#17302f] from-0% via-[#14264a] via-20% to-[#232327] to-50% text-white">
      <div className="flex h-full w-[671px] items-center pl-[7px]">
        <span className="-mt-[13px] rounded bg-[#0d1719] px-2 text-[14px] leading-[30px]">Jhonatan Souza</span>
      </div>
      <div className="flex h-full items-center">
        <span className="flex w-[36px] justify-center"><Windows11Logo className="size-[19px]" /></span>
        {sharedApps.map(({ name, Logo }) => (
          <span
            key={name}
            className={
              name === "Teams"
                ? "relative flex h-[34px] w-[37px] items-center justify-center rounded bg-[#4a2a2d]"
                : name === "UiPath Studio"
                  ? "relative flex h-[34px] w-[37px] items-center justify-center rounded bg-[#31343d]"
                  : "relative flex h-[34px] w-[37px] items-center justify-center"
            }
          >
            <Logo className="size-[19px]" />
            {name === "Teams" && <span className="absolute right-[3px] top-[3px] size-[11px] rounded-full bg-[#d92c3a] text-center text-[8px] leading-[11px]">1</span>}
            <span className={name === "UiPath Studio" ? "absolute bottom-0 h-[3px] w-3 rounded-full bg-[#4cc2ff]" : "absolute bottom-0 h-[3px] w-[5px] rounded-full bg-[#a0a0a4]"} />
          </span>
        ))}
      </div>
      <div className="ml-auto flex h-full items-center bg-linear-to-r from-[#232327] from-50% to-[#102a3b] pr-[17px] text-[9px] leading-[14px]">
        <CaretUp className="size-[11px]" />
        <Mic className="ml-3 size-3 text-[#5ba3b0]" />
        <p className="ml-[15px] text-center">POR<br />PTB2</p>
        <Monitor className="ml-3 size-[14px]" /><Speaker className="ml-[6px] size-[15px]" /><Battery className="ml-[6px] size-[15px]" />
        <p className="ml-[14px] text-right">10:30<br />01/02/2022</p>
        <span className="ml-[10px] size-[13px] rounded-full bg-[#4cc2ff] text-center text-[8px] leading-[13px] text-[#14262e]">1</span>
      </div>
    </div>

    <div role="dialog" aria-label="Restaurar páginas?" className="absolute right-0 top-[53px] w-[268px] rounded-b bg-[#292a2d] pb-[13px] pl-[14px] pr-[14px] pt-[17px] text-[#e8eaed] shadow-[0_1px_4px_#000]">
      <button aria-label="Fechar" className="absolute right-2 top-[7px]"><MdClose className="size-3" /></button>
      <p className="text-[11px] leading-4">Restaurar páginas?</p>
      <p className="mt-2 text-[10px] leading-4">O Chrome não foi encerrado corretamente.</p>
      <button className="ml-auto mt-3 block h-[27px] w-[70px] rounded-sm bg-[#8ab4f8] text-[10px] text-[#202124]">Restaurar</button>
    </div>
  </div>
);

/* ---------- right window ---------- */

const RightScreen = () => (
  <div className="flex min-w-0 flex-1 basis-1/2 flex-col bg-[#191919] text-white">
    <div className="grid h-[49px] shrink-0 grid-cols-3 items-center border-b border-black bg-[#0a0a0a] text-[#707070]">
      <span />
      <span className="text-center text-[16px]">Jhonatan Souza</span>
      <div className="flex items-center justify-end gap-[34px] pr-[17px]">
        <Minimize className="size-4" /><Restore className="h-[18px] w-[17px]" /><Cross className="size-4" />
      </div>
    </div>
    <div className="flex h-[75px] shrink-0 items-center bg-[#1f1f1f] pl-9 pr-[26px]">
      <Stroke className="h-[21px] w-5" w={1.4}><path d="M12 1.500Q8 5 3 5v7q0 7 9 11 9-4 9-11V5q-5 0-9-3.500z" /></Stroke>
      <span className="ml-[25px] text-[16px]">19:28</span>
      <button className="ml-auto h-10 w-[187px] rounded border border-[#5a5a5a] bg-[#292929] text-[16px] font-semibold">Solicitar controle</button>
      <span className="ml-[23px] mr-[15px] h-10 w-px bg-[#484848]" />
      <button aria-label="Participantes" className="flex w-[60px] justify-center">
        <Stroke className="size-[26px]"><circle cx="9" cy="6" r="4" /><circle cx="18.500" cy="7.500" r="2.800" /><path d="M2 13.500h13v4q0 5-6.500 5T2 17.500zM17.500 13.500H23v3q0 4-5 4" /></Stroke>
      </button>
      <button aria-label="Chat" className="flex w-[60px] justify-center">
        <Stroke className="size-[26px]"><path d="M12 1.500a10.500 10.500 0 1 1-5 19.700L1.500 22.500 3 17.300A10.500 10.500 0 0 1 12 1.500z" /><path d="M8.500 10h7M8.500 14h4.500" /></Stroke>
      </button>
      <button aria-label="Mais ações" className="flex w-[60px] justify-center"><MdMoreHoriz className="size-[30px]" /></button>
      <span className="mx-[15px] h-10 w-px bg-[#484848]" />
      <button aria-label="Ligar câmera" className="flex w-[60px] justify-center">
        <svg viewBox="0 0 26 26" className="size-[26px]" aria-hidden="true"><rect x="1" y="4" width="16" height="18" rx="4" fill="#fff" /><path d="m18 10 8-6v18l-8-6z" fill="#fff" /><path d="m1 1 25 25" stroke="#1f1f1f" strokeWidth="4" /><path d="m1 1 25 25" stroke="#fff" strokeWidth="1.500" /></svg>
      </button>
      <button aria-label="Microfone" className="flex w-[60px] justify-center"><Mic className="size-[26px]" /></button>
      <button aria-label="Compartilhar" className="flex w-[60px] justify-center">
        <svg viewBox="0 0 26 20" className="h-5 w-[26px]" aria-hidden="true"><rect width="26" height="20" rx="3" fill="#fff" /><path d="M13 16V4.500M8.500 8.500 13 4l4.500 4.500" fill="none" stroke="#1f1f1f" strokeWidth="1.800" /></svg>
      </button>
      <button className="ml-[17px] flex h-10 w-[115px] items-center justify-center gap-2 rounded bg-[#c4314b] text-[16px] font-semibold"><MdCallEnd className="size-[26px]" />Sair</button>
    </div>
    <div className="my-[6px] flex min-h-0 flex-1 pl-[5px]">
      <SharedScreen />
      <aside className="flex w-[313px] shrink-0 flex-col items-center px-[6px]">
        <div className="mt-[237px] flex size-[206px] items-center justify-center rounded-full bg-[#f4d9db] text-[80px] leading-none font-semibold text-[#762f38]">JS</div>
        <p className="mt-[18px] text-[14px] leading-5">Jhonatan Souza</p>
        <div className="mt-auto flex h-[166px] w-full items-center justify-center bg-[#1f1f1f]">
          <span className="flex size-[70px] items-center justify-center rounded-full bg-[#e8d0d3] text-[26px] font-semibold text-[#5a1219]">AS</span>
        </div>
      </aside>
    </div>
    <RightTaskbar />
  </div>
);

export default function App() {
  return (
    <div className="flex min-h-screen w-full items-stretch bg-black font-['Open_Sans','Noto_Sans',sans-serif]">
      <LeftScreen />
      <RightScreen />
    </div>
  );
}
